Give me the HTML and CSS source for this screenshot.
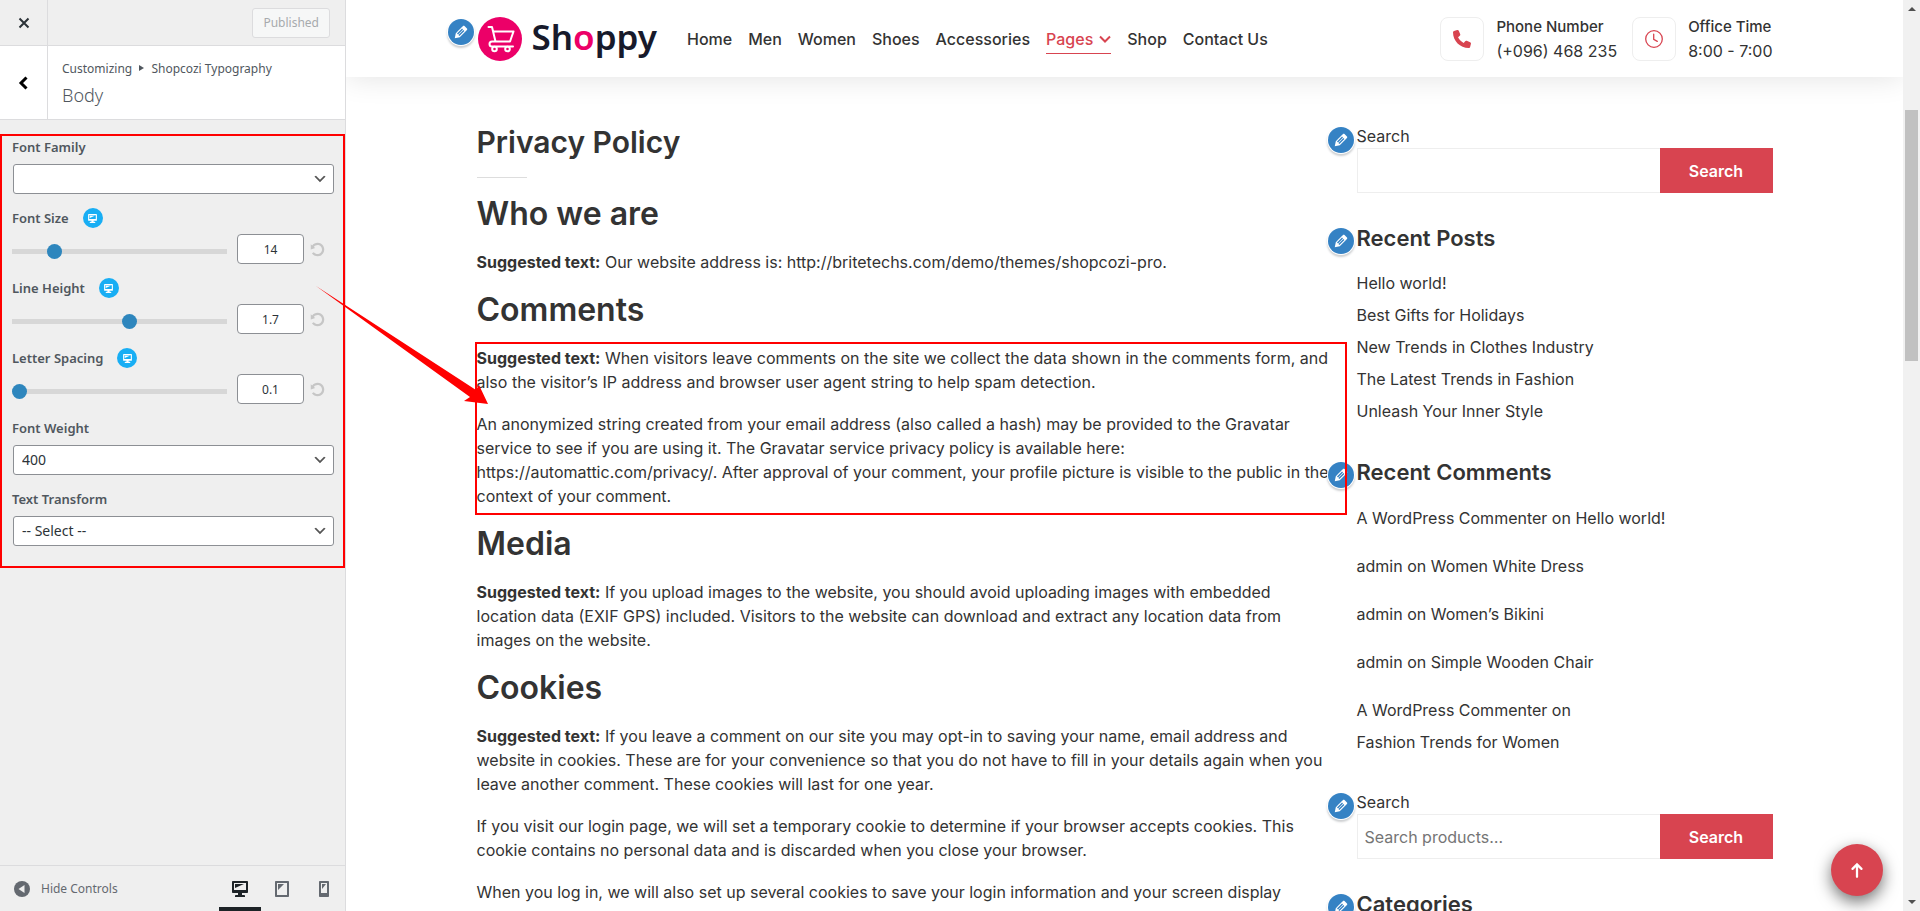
FILE: index.html
```html
<!DOCTYPE html>
<html lang="en">
<head>
<meta charset="utf-8">
<title>Customize: Body typography</title>
<link rel="stylesheet" href="styles.css">
</head>
<body>
<svg class="sprite" aria-hidden="true">
  <symbol id="desktop" viewBox="0 0 20 20"><path d="M3 2h14c.55 0 1 .45 1 1v10c0 .55-.45 1-1 1h-5v2h2c.55 0 1 .45 1 1v1H5v-1c0-.55.45-1 1-1h2v-2H3c-.55 0-1-.45-1-1V3c0-.55.45-1 1-1zm13 9V4H4v7h12zM5 5h9L5 9V5z"/></symbol>
  <symbol id="tablet" viewBox="0 0 20 20"><path d="M4 2h12c.55 0 1 .45 1 1v14c0 .55-.45 1-1 1H4c-.55 0-1-.45-1-1V3c0-.55.45-1 1-1zm11 14V4H5v12h10zM6 5h6l-6 6V5z"/></symbol>
  <symbol id="phone-device" viewBox="0 0 20 20"><path d="M6 2h8c.55 0 1 .45 1 1v14c0 .55-.45 1-1 1H6c-.55 0-1-.45-1-1V3c0-.55.45-1 1-1zm7 12V4H7v10h6zM8 5h4l-4 5V5z"/></symbol>
  <symbol id="pencil" viewBox="0 0 20 20"><path d="M13.89 3.39l2.71 2.72c.46.46.42 1.24.03 1.64l-8.01 8.02-5.56 1.16 1.16-5.58s7.6-7.63 7.99-8.03c.39-.39 1.22-.39 1.68.07zm-2.73 2.79l-5.59 5.61 1.11 1.11 5.54-5.65zm-2.97 8.23l5.58-5.6-1.07-1.08-5.59 5.6z"/></symbol>
  <symbol id="reset" viewBox="0 0 20 20"><path d="M10.25 1.02c5.1 0 8.75 4.04 8.75 9s-3.65 9-8.75 9c-3.2 0-6.02-1.59-7.68-3.99l2.59-1.52c1.1 1.5 2.86 2.51 4.84 2.51 3.3 0 6-2.79 6-6s-2.7-6-6-6c-1.97 0-3.72 1-4.82 2.49L7 8.02l-6 2v-7L2.89 4.6c1.69-2.17 4.36-3.58 7.36-3.58z"/></symbol>
</svg>

<aside class="panel">
  <div class="panel-top">
    <button class="close" aria-label="Close"><svg viewBox="0 0 12 12"><path d="M1.500 1.500 10.500 10.500M10.500 1.500 1.500 10.500"/></svg></button>
    <button class="published" disabled>Published</button>
  </div>
  <div class="panel-title">
    <button class="back" aria-label="Back"><svg viewBox="0 0 12 16"><path d="M8.500 2.500 3 8l5.500 5.500"/></svg></button>
    <div class="crumbs">
      <p>Customizing <span class="tri"></span> Shopcozi Typography</p>
      <h3>Body</h3>
    </div>
  </div>

  <form class="controls">
    <div class="control">
      <label for="family">Font Family</label>
      <select id="family"><option></option></select>
    </div>
    <div class="control">
      <div class="label-row"><label for="size">Font Size</label><button type="button" class="device-dot" aria-label="Desktop"><svg><use href="#desktop"/></svg></button></div>
      <div class="slider-row"><input type="range" aria-label="Font Size slider" min="0" max="79" value="14"><input id="size" class="num" type="text" value="14"><button type="button" class="reset" aria-label="Reset"><svg><use href="#reset"/></svg></button></div>
    </div>
    <div class="control">
      <div class="label-row"><label for="line">Line Height</label><button type="button" class="device-dot" aria-label="Desktop"><svg><use href="#desktop"/></svg></button></div>
      <div class="slider-row"><input type="range" aria-label="Line Height slider" min="0" max="3.1" step="0.1" value="1.7"><input id="line" class="num" type="text" value="1.7"><button type="button" class="reset" aria-label="Reset"><svg><use href="#reset"/></svg></button></div>
    </div>
    <div class="control">
      <div class="label-row"><label for="spacing">Letter Spacing</label><button type="button" class="device-dot" aria-label="Desktop"><svg><use href="#desktop"/></svg></button></div>
      <div class="slider-row"><input type="range" aria-label="Letter Spacing slider" min="0.1" max="10" step="0.1" value="0.1"><input id="spacing" class="num" type="text" value="0.1"><button type="button" class="reset" aria-label="Reset"><svg><use href="#reset"/></svg></button></div>
    </div>
    <div class="control">
      <label for="weight">Font Weight</label>
      <select id="weight"><option>400</option></select>
    </div>
    <div class="control">
      <label for="transform">Text Transform</label>
      <select id="transform"><option>-- Select --</option></select>
    </div>
  </form>

  <div class="panel-foot">
    <button class="hide"><svg viewBox="0 0 16 16"><circle cx="8" cy="8" r="8"/><path d="M10.500 4v8L4.500 8z" fill="#eee"/></svg>Hide Controls</button>
    <div class="devices">
      <button class="on" aria-label="Desktop preview"><svg><use href="#desktop"/></svg></button>
      <button aria-label="Tablet preview"><svg><use href="#tablet"/></svg></button>
      <button aria-label="Mobile preview"><svg><use href="#phone-device"/></svg></button>
    </div>
  </div>
</aside>

<div class="preview">
  <header class="site-header">
    <div class="container header-row">
      <button class="edit edit-logo" aria-label="Edit logo"><svg><use href="#pencil"/></svg></button>
      <a class="logo" href="#">
        <svg viewBox="0 0 44 44"><circle cx="22" cy="22" r="22" fill="#ec0068"/><g fill="none" stroke="#fff" stroke-width="2" stroke-linecap="round" stroke-linejoin="round"><path d="M10.500 10h3.500l3.500 14.500h14.500l3.500-10H16M17.500 24.500h-3.500a2.500 2.500 0 0 0 0 5H35"/><circle cx="16.500" cy="32" r="2.300" fill="#ec0068"/><circle cx="29.500" cy="32" r="2.300" fill="#ec0068"/></g></svg>
        <span class="logo-text">Sh<b>o</b>ppy</span>
      </a>
      <nav class="nav">
        <a href="#">Home</a><a href="#">Men</a><a href="#">Women</a><a href="#">Shoes</a><a href="#">Accessories</a><a href="#" class="active">Pages<svg viewBox="0 0 12 12"><path d="M1 3.500 6 8.500l5-5"/></svg></a><a href="#">Shop</a><a href="#">Contact Us</a>
      </nav>
      <div class="contacts">
        <div class="contact"><span class="tile"><svg viewBox="0 0 512 512"><path fill="#d84450" d="M164.900 24.600c-7.700-18.600-28-28.500-47.400-23.200l-88 24C12.100 30.200 0 46 0 64C0 311.400 200.600 512 448 512c18 0 33.800-12.100 38.600-29.500l24-88c5.300-19.400-4.600-39.700-23.200-47.400l-96-40c-16.300-6.800-35.200-2.100-46.300 11.600L304.700 368C234.300 334.700 177.300 277.700 144 207.300L193.300 167c13.700-11.200 18.400-30 11.600-46.300l-40-96z"/></svg></span><div><h6>Phone Number</h6><p>(+096) 468 235</p></div></div>
        <div class="contact"><span class="tile"><svg viewBox="0 0 18 18"><g fill="none" stroke="#d84450" stroke-width="1.300" stroke-linecap="round"><circle cx="9" cy="9" r="8.300"/><path d="M8.700 4.200V9.300l3.600 2.100"/></g></svg></span><div><h6>Office Time</h6><p>8:00 - 7:00</p></div></div>
      </div>
    </div>
  </header>

  <div class="container page">
    <main class="article">
      <h1>Privacy Policy</h1>
      <h2>Who we are</h2>
      <p><strong>Suggested text:</strong> Our website address is: http://britetechs.com/demo/themes/shopcozi-pro.</p>
      <h2>Comments</h2>
      <div class="marked">
        <p><strong>Suggested text:</strong> When visitors leave comments on the site we collect the data shown in the comments form, and also the visitor’s IP address and browser user agent string to help spam detection.</p>
        <p>An anonymized string created from your email address (also called a hash) may be provided to the Gravatar service to see if you are using it. The Gravatar service privacy policy is available here: https://automattic.com/privacy/. After approval of your comment, your profile picture is visible to the public in the context of your comment.</p>
      </div>
      <h2>Media</h2>
      <p><strong>Suggested text:</strong> If you upload images to the website, you should avoid uploading images with embedded location data (EXIF GPS) included. Visitors to the website can download and extract any location data from images on the website.</p>
      <h2>Cookies</h2>
      <p><strong>Suggested text:</strong> If you leave a comment on our site you may opt-in to saving your name, email address and website in cookies. These are for your convenience so that you do not have to fill in your details again when you leave another comment. These cookies will last for one year.</p>
      <p>If you visit our login page, we will set a temporary cookie to determine if your browser accepts cookies. This cookie contains no personal data and is discarded when you close your browser.</p>
      <p>When you log in, we will also set up several cookies to save your login information and your screen display</p>
    </main>

    <aside class="widgets">
      <section class="widget">
        <button class="edit" aria-label="Edit widget"><svg><use href="#pencil"/></svg></button>
        <label for="s1">Search</label>
        <div class="search"><input id="s1" type="text"><button>Search</button></div>
      </section>
      <section class="widget">
        <button class="edit" aria-label="Edit widget"><svg><use href="#pencil"/></svg></button>
        <h4>Recent Posts</h4>
        <ul>
          <li><a href="#">Hello world!</a></li>
          <li><a href="#">Best Gifts for Holidays</a></li>
          <li><a href="#">New Trends in Clothes Industry</a></li>
          <li><a href="#">The Latest Trends in Fashion</a></li>
          <li><a href="#">Unleash Your Inner Style</a></li>
        </ul>
      </section>
      <section class="widget">
        <button class="edit" aria-label="Edit widget"><svg><use href="#pencil"/></svg></button>
        <h4>Recent Comments</h4>
        <ul class="spaced">
          <li><a href="#">A WordPress Commenter</a> on <a href="#">Hello world!</a></li>
          <li>admin on <a href="#">Women White Dress</a></li>
          <li>admin on <a href="#">Women’s Bikini</a></li>
          <li>admin on <a href="#">Simple Wooden Chair</a></li>
          <li><a href="#">A WordPress Commenter</a> on<br><a href="#">Fashion Trends for Women</a></li>
        </ul>
      </section>
      <section class="widget">
        <button class="edit" aria-label="Edit widget"><svg><use href="#pencil"/></svg></button>
        <label for="s2">Search</label>
        <div class="search"><input id="s2" type="text" placeholder="Search products…"><button>Search</button></div>
      </section>
      <section class="widget">
        <button class="edit" aria-label="Edit widget"><svg><use href="#pencil"/></svg></button>
        <h4>Categories</h4>
      </section>
    </aside>
  </div>
  <button class="to-top" aria-label="Back to top"><svg viewBox="0 0 16 16"><path d="M8 14V3M4 7l4-4 4 4"/></svg></button>
</div>

<div class="scrollbar" aria-hidden="true"><span class="arrow up"></span><span class="thumb"></span><span class="arrow down"></span></div>

<svg class="pointer" viewBox="0 0 172 118" aria-hidden="true"><path d="M0 0 160 104 163 99 172 118 148 115 154 111z" fill="#f00"/></svg>
</body>
</html>
```
FILE: styles.css
```css
* { box-sizing: border-box; }
body {
  margin: 0;
  height: 100vh;
  display: flex;
  overflow: hidden;
  position: relative;
  font-family: Inter, "Liberation Sans", sans-serif;
  font-size: 16px;
  line-height: 24px;
  color: #333;
  background: #fff;
}
h1, h2, h3, h4, h6, p, ul { margin: 0; padding: 0; }
button, input, select { font: inherit; color: inherit; }
button { border: 0; padding: 0; background: none; }
a { color: inherit; text-decoration: none; }
svg { display: block; fill: currentColor; }
.sprite { position: absolute; width: 0; height: 0; }

/* Customizer panel */
.panel {
  flex: 0 0 346px;
  display: flex;
  flex-direction: column;
  background: #efefef;
  border-right: 1px solid #dcdcde;
  font-family: "Noto Sans", "Open Sans", sans-serif;
  font-size: 13px;
  line-height: 20px;
  color: #50575e;
}
.panel-top {
  height: 46px;
  display: flex;
  justify-content: space-between;
  align-items: center;
  padding-right: 15px;
  border-bottom: 1px solid #dcdcde;
}
.close, .back {
  width: 48px;
  align-self: stretch;
  display: flex;
  align-items: center;
  justify-content: center;
  border-right: 1px solid #dcdcde;
}
.close svg, .back svg { fill: none; stroke: #2c3338; stroke-width: 2; }
.close svg { width: 12px; height: 12px; }
.back svg { width: 12px; height: 16px; stroke: #000; stroke-width: 3; }
.published {
  height: 30px;
  padding: 0 10px;
  border: 1px solid #dcdcde;
  border-radius: 3px;
  background: #f6f7f7;
  color: #a7aaad;
  font-size: 12px;
}
.panel-title {
  height: 74px;
  display: flex;
  background: #fff;
  border-bottom: 1px solid #dcdcde;
}
.crumbs { padding: 12px 14px; }
.crumbs p { font-size: 12px; line-height: 22px; }
.crumbs h3 { font-size: 18px; font-weight: 300; line-height: 30px; }
.tri {
  display: inline-block;
  margin: 0 4px 2px;
  border: 3px solid transparent;
  border-left: 5px solid #50575e;
  border-right: 0;
}
.controls {
  position: relative;
  margin-top: 14px;
  padding: 0 11px 22px 12px;
  display: flex;
  flex-direction: column;
  gap: 11px;
}
.controls::after {
  content: "";
  position: absolute;
  inset: 0;
  border: 2px solid #f00;
  pointer-events: none;
}
.control { display: flex; flex-direction: column; }
.control label { font-weight: 600; line-height: 26px; }
.control > label { margin-bottom: 4px; }
.control select {
  appearance: none;
  margin-left: 1px;
  height: 30px;
  padding: 0 8px;
  border: 1px solid #8c8f94;
  border-radius: 3px;
  color: #2c3338;
  font-size: 14px;
  background: #fff url("data:image/svg+xml,%3Csvg xmlns='http://www.w3.org/2000/svg' viewBox='0 0 20 20'%3E%3Cpath d='M5 6l5 5 5-5 2 1-7 7-7-7 2-1z' fill='%23555'/%3E%3C/svg%3E") no-repeat right 5px center / 16px 16px;
}
.label-row { display: flex; align-items: center; gap: 14px; }
.device-dot {
  width: 20px;
  height: 20px;
  border-radius: 50%;
  background: #18aef4;
  color: #fff;
  display: grid;
  place-items: center;
}
.device-dot svg { width: 11px; height: 11px; }
.slider-row { display: flex; align-items: center; margin-top: 3px; }
.slider-row input[type="range"] {
  appearance: none;
  flex: 1;
  min-width: 0;
  height: 5px;
  margin: 4px 10px 0 0;
  background: #d7d7d7;
}
.slider-row input[type="range"]::-webkit-slider-thumb {
  appearance: none;
  width: 15px;
  height: 15px;
  border-radius: 50%;
  background: #2e86bd;
}
.num {
  width: 67px;
  height: 30px;
  padding: 0;
  border: 1px solid #8c8f94;
  border-radius: 4px;
  background: #fff;
  color: #2c3338;
  font-size: 12px;
  text-align: center;
}
.reset { margin: 0 9px 0 6px; color: #c6c6c6; }
.reset svg { width: 15px; height: 15px; }
.panel-foot {
  margin-top: auto;
  height: 46px;
  display: flex;
  justify-content: space-between;
  padding: 0 0 0 14px;
  border-top: 1px solid #dcdcde;
  color: #646970;
}
.hide { display: flex; align-items: center; gap: 11px; font-size: 12px; }
.hide svg { width: 16px; height: 16px; }
.devices { display: flex; }
.devices button { width: 42px; display: grid; place-items: center; border-bottom: 4px solid transparent; padding-top: 4px; }
.devices .on { color: #1d2327; border-color: #1d2327; }
.devices svg { width: 20px; height: 20px; }

/* Site preview */
.preview { flex: 1; min-width: 0; position: relative; overflow: hidden; }
.container { max-width: 1320px; margin: 0 auto; padding: 0 12px; }
.site-header { position: relative; box-shadow: 0 0 30px rgba(0, 0, 0, .12); background: #fff; }
.header-row { position: relative; height: 77px; display: flex; align-items: center; }
.edit {
  position: absolute;
  left: -29px;
  top: 3px;
  z-index: 1;
  width: 26px;
  height: 26px;
  border-radius: 50%;
  background: #3582c4;
  color: #fff;
  box-shadow: 0 0 0 1px #fff, 0 2px 2px 1px rgba(60, 67, 74, .25);
  display: grid;
  place-items: center;
}
.edit svg { width: 18px; height: 18px; }
.edit-logo { left: -17px; top: 19px; }
.logo { display: flex; align-items: center; gap: 10px; margin: 0 30px 0 1px; }
.logo svg { width: 44px; height: 44px; }
.logo-text { font-family: "Noto Sans", sans-serif; font-size: 35px; font-weight: 600; line-height: 48px; padding-bottom: 4px; color: #171a2b; }
.logo-text b { font-weight: inherit; color: #ec0068; }
.nav { display: flex; gap: 16px; font-weight: 500; }
.nav a { padding: 4px 0 2px; line-height: 24px; border-bottom: 1px solid transparent; }
.nav .active { display: flex; align-items: center; gap: 6px; color: #d84450; border-color: #d84450; }
.nav svg { width: 12px; height: 12px; fill: none; stroke: currentColor; stroke-width: 2; }
.contacts { margin-left: auto; display: flex; gap: 15px; }
.contact { display: flex; align-items: center; gap: 12px; }
.contact h6 { font-size: 15px; font-weight: 500; line-height: 24px; }
.contact p { line-height: 24px; }
.tile { width: 44px; height: 44px; border: 1px solid #eee; border-radius: 8px; display: grid; place-items: center; }
.tile svg { width: 18px; height: 18px; }

.page { display: grid; grid-template-columns: minmax(0, 856fr) minmax(0, 416fr); gap: 24px; padding-top: 47px; }
.article p { margin-bottom: 18px; }
.article strong { font-weight: 700; }
.article h1, .article h2 { font-size: 32px; font-weight: 600; line-height: 36px; }
.article h2 { margin-bottom: 18px; }
.article h1 { font-size: 30px; padding-bottom: 18px; margin-bottom: 18px; position: relative; }
.article h1::after { content: ""; display: block; position: absolute; bottom: 0; width: 50px; height: 1px; background: #ddd; }
.marked { position: relative; }
.marked::after { content: ""; position: absolute; z-index: 2; inset: -4px -14px -7px -2px; border: 2px solid #f00; pointer-events: none; }

.widgets { display: flex; flex-direction: column; gap: 32px; }
.widget { position: relative; }
.widget label { display: block; }
.widget h4 { font-size: 22px; font-weight: 600; line-height: 27px; margin-bottom: 15px; }
.widget ul { list-style: none; }
.widget li { line-height: 32px; }
.widget .spaced { display: grid; gap: 16px; padding-top: 1px; }
.search { display: flex; height: 45px; }
.search input { flex: 1; min-width: 0; border: 1px solid #eee; border-right: 0; padding: 0 7px; background: #fff; }
.search input::placeholder { color: #757575; }
.search button { width: 113px; background: #d84450; color: #fff; font-weight: 600; }
.to-top {
  position: absolute;
  right: 20px;
  bottom: 15px;
  width: 52px;
  height: 52px;
  border-radius: 50%;
  background: #d84450;
  color: #fff;
  box-shadow: 0 6px 16px rgba(0, 0, 0, .55);
  display: grid;
  place-items: center;
}
.to-top svg { width: 18px; height: 18px; fill: none; stroke: currentColor; stroke-width: 2; stroke-linecap: round; }

/* Scrollbar strip */
.scrollbar { flex: 0 0 17px; display: flex; flex-direction: column; align-items: center; background: #f1f1f1; }
.arrow { border: 4px solid transparent; }
.up { border-top: 0; border-bottom-color: #505050; margin: 7px 0 99px; }
.down { border-bottom: 0; border-top-color: #505050; margin: auto 0 7px; }
.thumb { width: 13px; height: 251px; background: #c1c1c1; }

.pointer { position: absolute; z-index: 3; left: 316px; top: 286px; width: 172px; height: 118px; }
```
